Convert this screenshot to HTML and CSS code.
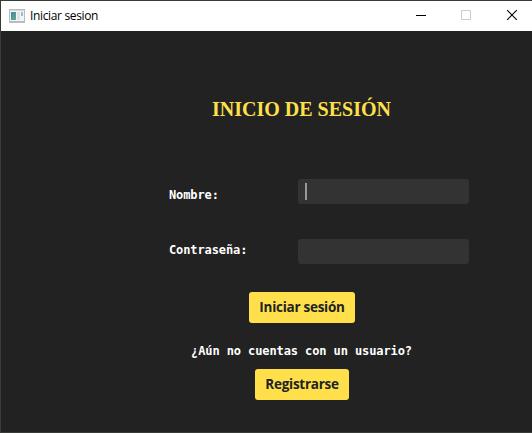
FILE: index.html
```html
<!DOCTYPE html>
<html lang="es">
<head>
<meta charset="utf-8">
<title>Iniciar sesion</title>
<link rel="stylesheet" href="styles.css">
</head>
<body>
<div class="window">
  <header class="titlebar">
    <svg class="app-icon" width="16" height="14" viewBox="0 0 16 14" shape-rendering="crispEdges">
      <defs><linearGradient id="pane" x1="0" y1="0" x2="1" y2="1"><stop offset="0" stop-color="#4b82ac"/><stop offset="1" stop-color="#5ab083"/></linearGradient></defs>
      <rect width="16" height="14" fill="#b9bcbf"/>
      <rect x="1" y="1" width="14" height="1" fill="#d2d6da"/>
      <rect x="1" y="2" width="14" height="10" fill="#f3f4f5"/>
      <rect x="2" y="3" width="5" height="8" fill="url(#pane)"/>
      <rect x="8" y="3" width="3" height="8" fill="#e0e3e6"/>
      <rect x="12" y="3" width="2" height="4" fill="#8fc0b8"/>
      <rect x="12" y="3" width="1" height="2" fill="#a9bcdc"/>
    </svg>
    <span class="caption">Iniciar sesion</span>
    <div class="controls">
      <svg width="46" height="30" viewBox="0 0 46 30"><path d="M18 14.5h10" stroke="#000"/></svg>
      <svg width="46" height="30" viewBox="0 0 46 30"><path d="M17.500 9.500h9v9h-9z" fill="none" stroke="#ccc"/></svg>
      <svg width="46" height="30" viewBox="0 0 46 30"><path d="M17.200 9.200l9.600 9.600M26.800 9.200l-9.600 9.600" stroke="#000" stroke-width="1.100"/></svg>
    </div>
  </header>
  <main class="content">
    <h1 class="title">INICIO DE SESIÓN</h1>
    <form class="fields">
      <label class="label label-name" for="nombre">Nombre:</label>
      <div class="field" id="nombre"><span class="caret"></span></div>
      <label class="label label-pass" for="clave">Contraseña:</label>
      <div class="field" id="clave"></div>
    </form>
    <button class="btn login">Iniciar sesión</button>
    <p class="hint">¿Aún no cuentas con un usuario?</p>
    <button class="btn register">Registrarse</button>
  </main>
</div>
</body>
</html>
```

FILE: styles.css
```css
* { box-sizing: border-box; }
body { margin: 0; width: 532px; height: 433px; overflow: hidden; background: #3a3a35; }
.window {
  height: 433px;
  border: solid #393b38;
  border-width: 1px 0 1px 1px;
  background: #222;
}
.titlebar { display: flex; align-items: center; height: 30px; padding-left: 8px; background: #fff; }
.app-icon { display: block; margin-right: 5px; }
.caption { font: 12px/16px "Open Sans", sans-serif; letter-spacing: -0.35px; color: #000; }
.controls { display: flex; margin-left: auto; margin-right: -4px; }
.controls svg { display: block; }
.content { display: flex; flex-direction: column; align-items: center; }
.title {
  margin: 66px 0 0;
  padding-left: 70px;
  font: bold 20px/24px "Liberation Serif", serif;
  color: #ffe04b;
  white-space: nowrap;
}
.fields {
  display: grid;
  grid-template-columns: 129px 171px;
  row-gap: 35px;
  align-self: flex-start;
  margin: 58px 0 0 168px;
}
.label, .hint {
  font: bold 12px/16px "DejaVu Sans Mono", monospace;
  letter-spacing: -0.1px;
  color: #fff;
  white-space: nowrap;
}
.label-name { padding-top: 8px; }
.label-pass { padding-top: 3px; }
.field { height: 25px; padding: 4px 7px; border-radius: 3px; background: #333; }
.caret { display: block; width: 2px; height: 17px; background: #999; }
.btn {
  height: 31px;
  margin-left: 71px;
  padding: 0;
  border: 0;
  border-radius: 3px;
  background: #ffe04b;
  color: #222;
  font: bold 13.5px/31px "Open Sans", sans-serif;
  letter-spacing: -0.27px;
  white-space: nowrap;
}
.login { width: 106px; margin-top: 28px; }
.hint { margin: 20px 0 10px; padding-left: 70px; }
.register { width: 94px; }
```
